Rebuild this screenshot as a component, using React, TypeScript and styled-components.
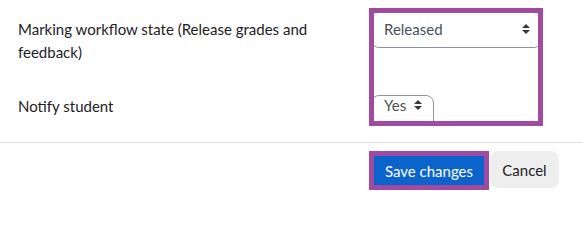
import React from "react";
import styled, { createGlobalStyle } from "styled-components";

const GlobalStyle = createGlobalStyle`
  html, body { margin: 0; padding: 0; background: #ffffff; }
  body {
    font-family: Lato, "Liberation Sans", sans-serif;
    font-size: 15px;
    color: #1d2125;
  }
`;

const PURPLE = "#a04aa1";

const Page = styled.div`
  width: 583px;
  height: 202px;
  overflow: hidden;
  display: flex;
  flex-direction: column;
`;

const FormArea = styled.div`
  display: grid;
  grid-template-columns: 351px 174px;
  padding: 8px 0 0 18px;
`;

const LabelColumn = styled.div`
  display: flex;
  flex-direction: column;
  gap: 31px;
  padding-top: 10px;
`;

const FieldLabel = styled.label`
  display: block;
  max-width: 320px;
  line-height: 23px;
`;

const Highlight = styled.div`
  box-sizing: border-box;
  width: 174px;
  height: 118px;
  border: 5px solid ${PURPLE};
  overflow: hidden;
  display: flex;
  flex-direction: column;
  align-items: flex-start;
`;

const SelectBox = styled.div<{ $width: number; $top?: boolean; $gap: number }>`
  box-sizing: border-box;
  flex: none;
  width: ${(p) => p.$width}px;
  height: 38px;
  margin: ${(p) => p.$gap}px 0 0 -3px;
  padding: 0 11px 0 12px;
  border: 1px solid #8f959e;
  border-radius: 8px;
  background: #ffffff;
  color: #495057;
  display: flex;
  justify-content: space-between;
  align-items: ${(p) => (p.$top ? "flex-start" : "center")};
`;

const SelectValue = styled.span<{ $lh: number }>`
  line-height: ${(p) => p.$lh}px;
  white-space: nowrap;
`;

const CaretSlot = styled.span<{ $lh: number }>`
  height: ${(p) => p.$lh}px;
  display: flex;
  align-items: center;
`;

const Divider = styled.hr`
  margin: 16px 0 0;
  border: 0;
  border-top: 1px solid #dee2e6;
  width: 100%;
`;

const Footer = styled.div`
  display: flex;
  justify-content: flex-end;
  align-items: flex-start;
  gap: 1px;
  padding: 8px 24px 0 0;
`;

const SaveHighlight = styled.div`
  box-sizing: border-box;
  width: 120px;
  height: 39px;
  border: 5px solid ${PURPLE};
  overflow: hidden;
`;

const Button = styled.button<{ $primary?: boolean }>`
  box-sizing: border-box;
  font-family: inherit;
  font-size: 15px;
  line-height: 22px;
  border: 1px solid transparent;
  border-radius: 8px;
  cursor: pointer;
  white-space: nowrap;
  background: ${(p) => (p.$primary ? "#0b64cc" : "#eeeeee")};
  color: ${(p) => (p.$primary ? "#ffffff" : "#1d2125")};
  height: ${(p) => (p.$primary ? 38 : 37)}px;
  width: ${(p) => (p.$primary ? 116 : 69)}px;
  margin: ${(p) => (p.$primary ? "-4px 0 0 -3px" : "0")};
  padding: 0;
`;

const Caret = () => (
  <svg width="8" height="10" viewBox="0 0 4 5" aria-hidden="true">
    <path d="M2 0L0 2h4zm0 5L0 3h4z" fill="#343a40" />
  </svg>
);

type SelectProps = { value: string; width: number; gap: number; top?: boolean; lh: number };

const FakeSelect = ({ value, width, gap, top, lh }: SelectProps) => (
  <SelectBox role="combobox" $width={width} $gap={gap} $top={top}>
    <SelectValue $lh={lh}>{value}</SelectValue>
    <CaretSlot $lh={lh}>
      <Caret />
    </CaretSlot>
  </SelectBox>
);

export default function App() {
  return (
    <>
      <GlobalStyle />
      <Page>
        <FormArea>
          <LabelColumn>
            <FieldLabel>Marking workflow state (Release grades and feedback)</FieldLabel>
            <FieldLabel>Notify student</FieldLabel>
          </LabelColumn>
          <Highlight>
            <FakeSelect value="Released" width={171} gap={-3} lh={21} />
            <FakeSelect value="Yes" width={63} gap={47} top lh={18} />
          </Highlight>
        </FormArea>
        <Divider />
        <Footer>
          <SaveHighlight>
            <Button $primary>Save changes</Button>
          </SaveHighlight>
          <Button>Cancel</Button>
        </Footer>
      </Page>
    </>
  );
}
